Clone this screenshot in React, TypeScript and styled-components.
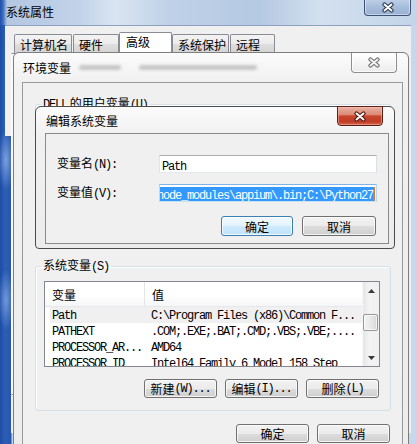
import React from "react";
import styled, { createGlobalStyle } from "styled-components";

const CJK = `"Noto Sans CJK SC", "Noto Sans", sans-serif`;
const MONO = `"Liberation Mono", "DejaVu Sans Mono", monospace`;

const GlobalStyle = createGlobalStyle`
  html, body { margin: 0; padding: 0; }
  body { font-family: ${CJK}; font-size: 12px; color: #000; background: #2a5bb3; }
  #root { width: 417px; height: 444px; }
`;

const Desktop = styled.div`
  position: relative;
  width: 417px;
  height: 444px;
  overflow: hidden;
  display: flex;
  flex-direction: column;
  background:
    radial-gradient(ellipse 8px 30px at 6px 160px, rgba(140, 175, 230, 0.8), rgba(140, 175, 230, 0) 100%),
    radial-gradient(ellipse 8px 30px at 6px 300px, rgba(140, 175, 230, 0.7), rgba(140, 175, 230, 0) 100%),
    linear-gradient(90deg, #1d4ca5 0px, #2d5fb6 5px, #2656ae 11px, #c3d5ea 12px, #c8d8ec 417px);
`;

const SysTitle = styled.div`
  position: relative;
  height: 25px;
  flex: none;
  padding: 3px 0 0 6px;
  box-sizing: border-box;
  line-height: 17px;
  font-size: 12px;
  color: #000;
  background: linear-gradient(90deg, #1f4fa8 0px, #3a6bc0 3px, #b3c7e2 7px, #c2d3e9 80px, #dbe5f1 115px, #bfd1e7 170px, #b5c9e3 260px, #d3e0ef 320px, #c9d9ec 380px, #c3d5ea 417px);
`;

const SysClient = styled.div`
  margin: 0 6px 0 5px;
  height: 408px;
  border-top: 1px solid #8ea2bf;
  box-sizing: border-box;
  display: flex;
  flex-direction: column;
  background:
    linear-gradient(#f0f0f0, #f0f0f0) 0 0 / 100% 110px no-repeat,
    linear-gradient(#f0f0f0, #f0f0f0) 6px 0 / calc(100% - 6px) 100% no-repeat;
`;

const TabStrip = styled.div`
  display: flex;
  align-items: flex-end;
  height: 27px;
  padding-left: 9px;
  flex: none;
`;

const Tab = styled.div<{ $w: number; $ml: number; $sel?: boolean }>`
  box-sizing: border-box;
  width: ${(p) => p.$w}px;
  margin-left: ${(p) => p.$ml}px;
  height: ${(p) => (p.$sel ? 21 : 19)}px;
  border: 1px solid #898c95;
  border-bottom: none;
  border-radius: 2px 2px 0 0;
  padding-left: ${(p) => (p.$sel ? 6 : 5)}px;
  line-height: ${(p) => (p.$sel ? 18 : 19)}px;
  font-size: 12px;
  white-space: nowrap;
  background: ${(p) =>
    p.$sel ? "#ffffff" : "linear-gradient(180deg, #f3f3f3 0%, #ebebeb 50%, #dedede 51%, #d4d4d4 100%)"};
`;

const TabPane = styled.div`
  flex: 1;
  margin: 0 4px 38px 6px;
  border: 1px solid #898c95;
  border-left-color: #fbfbfb;
  background: #f7f7f7;
`;

const CloseBase = styled.div`
  position: absolute;
  box-sizing: border-box;
  display: flex;
  align-items: center;
  justify-content: center;
  border-radius: 0 0 4px 4px;
`;

const SysClose = styled(CloseBase)`
  right: 6px;
  top: -2px;
  width: 47px;
  height: 18px;
  border: 1px solid #3d5173;
  border-top: none;
  background: linear-gradient(180deg, #c3d3e8 0%, #a9bedc 50%, #98b0d4 100%);
  box-shadow: inset 0 0 0 1px rgba(255, 255, 255, 0.45);
  padding-top: 2px;
`;

const InactiveClose = styled(CloseBase)`
  right: 6px;
  top: 0;
  width: 46px;
  height: 20px;
  border: 1px solid #8e8e8e;
  border-top: none;
  background: linear-gradient(180deg, #ffffff 0%, #f6f6f6 50%, #ebebeb 100%);
  box-shadow: inset 0 0 0 1px rgba(255, 255, 255, 0.8);
`;

const RedClose = styled(CloseBase)`
  right: 6px;
  top: -1px;
  width: 46px;
  height: 20px;
  border: 1px solid #5b1f15;
  background: linear-gradient(180deg, #eab2a5 0%, #dc8a75 42%, #c8472f 50%, #c13c24 80%, #d3664b 100%);
  box-shadow: inset 0 0 0 1px rgba(255, 200, 190, 0.45);
`;

const CloseGlyph = ({ fill, outline }: { fill: string; outline: string }) => (
  <svg width="14" height="11" viewBox="0 0 14 11">
    <path d="M3.5 2.5 L10.5 8.5 M10.5 2.5 L3.5 8.5" stroke={outline} strokeWidth="4.2" strokeLinecap="round" fill="none" />
    <path d="M3.5 2.5 L10.5 8.5 M10.5 2.5 L3.5 8.5" stroke={fill} strokeWidth="2" strokeLinecap="round" fill="none" />
  </svg>
);

const Frame = styled.div<{ $active?: boolean }>`
  position: absolute;
  box-sizing: border-box;
  display: flex;
  flex-direction: column;
  border: 1px solid ${(p) => (p.$active ? "#4b4b4b" : "#7e7e7e")};
  border-radius: 6px 6px 4px 4px;
  background: linear-gradient(180deg, #fbfbfb 0px, #f1f1f1 28px, #ececec 100%);
`;

const EnvWindow = styled(Frame)`
  left: 13px;
  top: 52px;
  width: 396px;
  height: 420px;
  padding: 0 5px 0 8px;
`;

const EditDialog = styled(Frame)`
  left: 35px;
  top: 106px;
  width: 360px;
  height: 143px;
  padding: 0 5px 4px 9px;
`;

const TitleBar = styled.div<{ $h: number }>`
  position: relative;
  flex: none;
  height: ${(p) => p.$h}px;
  display: flex;
  align-items: center;
  padding-left: 1px;
  font-size: 12px;
  white-space: nowrap;
`;

const Smudge = styled.span<{ $w: number; $ml: number }>`
  display: inline-block;
  width: ${(p) => p.$w}px;
  height: 5px;
  margin-left: ${(p) => p.$ml}px;
  background: rgba(110, 110, 110, 0.35);
  border-radius: 3px;
  filter: blur(1.6px);
`;

const EnvClient = styled.div`
  flex: 1;
  border: 1px solid #9a9a9a;
  background: #f0f0f0;
  display: flex;
  flex-direction: column;
  align-items: flex-start;
`;

const Group = styled.fieldset<{ $top: number; $bottom: number }>`
  box-sizing: border-box;
  width: 356px;
  min-inline-size: 0;
  margin: ${(p) => p.$top}px 0 ${(p) => p.$bottom}px 12px;
  padding: 7px 10px 12px 8px;
  border: 1px solid #d5dfe5;
  border-radius: 3px;
  box-shadow: inset 1px 1px 0 #ffffff;
`;

const Legend = styled.legend`
  margin-left: -3px;
  padding: 0 2px;
  line-height: 14px;
  font-size: 12px;
  white-space: nowrap;
`;

const Mono = styled.span`
  font-family: ${MONO};
  font-size: 12px;
  letter-spacing: -1.2px;
`;

const Spacer = styled.div<{ $h: number }>`
  height: ${(p) => p.$h}px;
`;

const ListView = styled.div`
  box-sizing: border-box;
  width: 336px;
  height: 86px;
  border: 1px solid #828790;
  background: #ffffff;
  display: flex;
  overflow: hidden;
`;

const ListBody = styled.div`
  flex: 1;
  min-width: 0;
  display: flex;
  flex-direction: column;
  overflow: hidden;
`;

const HeaderRow = styled.div`
  flex: none;
  display: flex;
  height: 25px;
  box-sizing: border-box;
  border-bottom: 1px solid #e7e8ea;
  background: linear-gradient(180deg, #ffffff 0%, #ffffff 55%, #f5f6f7 100%);
`;

const HeaderCell = styled.div<{ $w?: number }>`
  ${(p) => (p.$w ? `width: ${p.$w}px; flex: none; border-right: 1px solid #e3e4e6;` : "flex: 1;")}
  box-sizing: border-box;
  display: flex;
  align-items: center;
  padding-left: 7px;
  font-size: 12px;
`;

const Row = styled.div<{ $sel?: boolean }>`
  flex: none;
  display: flex;
  height: 16px;
  margin-left: 5px;
  align-items: center;
  white-space: nowrap;
  background: ${(p) => (p.$sel ? "#f0f0f0" : "transparent")};
`;

const Cell = styled.div<{ $w?: number; $pl: number }>`
  ${(p) => (p.$w ? `width: ${p.$w}px; flex: none;` : "flex: 1; min-width: 0;")}
  box-sizing: border-box;
  padding-left: ${(p) => p.$pl}px;
  overflow: hidden;
  line-height: 16px;
`;

const ScrollBar = styled.div`
  flex: none;
  width: 17px;
  display: flex;
  flex-direction: column;
  background: linear-gradient(90deg, #e6e6e6 0%, #f3f3f3 40%, #f0f0f0 100%);
  border-left: 1px solid #f7f7f7;
  box-sizing: border-box;
`;

const ScrollArrow = styled.div`
  flex: none;
  height: 17px;
  display: flex;
  align-items: center;
  justify-content: center;
`;

const ScrollTrack = styled.div`
  flex: 1;
  display: flex;
  flex-direction: column;
  padding-top: 15px;
`;

const Thumb = styled.div`
  box-sizing: border-box;
  width: 15px;
  height: 17px;
  border: 1px solid #979797;
  border-radius: 2px;
  background: linear-gradient(90deg, #f3f3f3 0%, #e8e8e8 50%, #d6d6d6 100%);
  box-shadow: inset 0 0 0 1px rgba(255, 255, 255, 0.7);
`;

const ButtonRow = styled.div<{ $mt: number; $pr: number; $gap: number }>`
  display: flex;
  justify-content: flex-end;
  gap: ${(p) => p.$gap}px;
  margin-top: ${(p) => p.$mt}px;
  padding-right: ${(p) => p.$pr}px;
  align-self: stretch;
`;

const Button = styled.div<{ $w: number; $h?: number; $default?: boolean }>`
  box-sizing: border-box;
  width: ${(p) => p.$w}px;
  height: ${(p) => p.$h ?? 19}px;
  border: 1px solid ${(p) => (p.$default ? "#3c7fb1" : "#707070")};
  border-radius: 3px;
  background: ${(p) =>
    p.$default
      ? "linear-gradient(180deg, #f2f9fe 0%, #e3f2fc 50%, #cfeafc 51%, #bfe3fb 100%)"
      : "linear-gradient(180deg, #f2f2f2 0%, #ebebeb 50%, #dddddd 51%, #cfcfcf 100%)"};
  box-shadow: inset 0 0 0 1px rgba(255, 255, 255, 0.75);
  display: flex;
  align-items: center;
  justify-content: center;
  font-size: 12px;
  white-space: nowrap;
`;

const EditClient = styled.div`
  flex: 1;
  border: 1px solid #8a8a8a;
  background: #f0f0f0;
  display: flex;
  flex-direction: column;
  padding-top: 20px;
`;

const FieldGrid = styled.div`
  display: grid;
  grid-template-columns: 102px 218px;
  row-gap: 9px;
  padding-left: 11px;
  align-items: center;
`;

const FieldLabel = styled.div`
  font-size: 12px;
  white-space: nowrap;
  line-height: 18px;
`;

const TextBox = styled.div<{ $focus?: boolean }>`
  box-sizing: border-box;
  height: 18px;
  border: 1px solid;
  border-color: ${(p) => (p.$focus ? "#7eb4ea #b7d9f7 #c7e2f1 #b7d9f7" : "#abadb3 #dbdfe6 #e3e9ef #e2e3ea")};
  background: #ffffff;
  overflow: hidden;
  white-space: nowrap;
  padding: 1px 0 0 2px;
  line-height: 15px;
`;

const Selected = styled.span`
  display: inline-block;
  margin-left: -5px;
  background: #3399ff;
  color: #ffffff;
  line-height: 14px;
  height: 14px;
  border-right: 2px solid #d9793c;
`;

const Triangle = ({ up }: { up?: boolean }) => (
  <svg width="7" height="4" viewBox="0 0 7 4">
    <polygon points={up ? "0,4 7,4 3.5,0" : "0,0 7,0 3.5,4"} fill="#3b3b3b" />
  </svg>
);

const tabs = [
  { label: "计算机名", w: 58, ml: 0 },
  { label: "硬件", w: 46, ml: 1 },
  { label: "高级", w: 53, ml: 0, sel: true },
  { label: "系统保护", w: 57, ml: 0 },
  { label: "远程", w: 45, ml: 1 },
];

const rows = [
  { name: "Path", value: "C:\\Program Files (x86)\\Common F...", sel: true },
  { name: "PATHEXT", value: ".COM;.EXE;.BAT;.CMD;.VBS;.VBE;...." },
  { name: "PROCESSOR_AR...", value: "AMD64" },
  { name: "PROCESSOR_ID", value: "Intel64 Family 6 Model 158 Step" },
];

export default function App() {
  return (
    <>
      <GlobalStyle />
      <Desktop>
        <SysTitle>
          系统属性
          <SysClose>
            <CloseGlyph fill="#ffffff" outline="#2c3950" />
          </SysClose>
        </SysTitle>
        <SysClient>
          <TabStrip>
            {tabs.map((t) => (
              <Tab key={t.label} $w={t.w} $ml={t.ml} $sel={t.sel}>
                {t.label}
              </Tab>
            ))}
          </TabStrip>
          <TabPane />
        </SysClient>

        <EnvWindow>
          <TitleBar $h={29}>
            环境变量
            <Smudge $w={42} $ml={8} />
            <Smudge $w={118} $ml={18} />
            <InactiveClose>
              <CloseGlyph fill="#f4f4f4" outline="#6d6d6d" />
            </InactiveClose>
          </TitleBar>
          <EnvClient>
            <Group $top={13} $bottom={12}>
              <Legend>
                <Mono>DELL</Mono> 的用户变量<Mono>(U)</Mono>
              </Legend>
              <Spacer $h={114} />
            </Group>
            <Group $top={0} $bottom={0}>
              <Legend>
                系统变量<Mono>(S)</Mono>
              </Legend>
              <ListView>
                <ListBody>
                  <HeaderRow>
                    <HeaderCell $w={100}>变量</HeaderCell>
                    <HeaderCell>值</HeaderCell>
                  </HeaderRow>
                  {rows.map((r) => (
                    <Row key={r.name} $sel={r.sel}>
                      <Cell $w={94} $pl={2}>
                        <Mono>{r.name}</Mono>
                      </Cell>
                      <Cell $pl={7}>
                        <Mono>{r.value}</Mono>
                      </Cell>
                    </Row>
                  ))}
                </ListBody>
                <ScrollBar>
                  <ScrollArrow>
                    <Triangle up />
                  </ScrollArrow>
                  <ScrollTrack>
                    <Thumb />
                  </ScrollTrack>
                  <ScrollArrow>
                    <Triangle />
                  </ScrollArrow>
                </ScrollBar>
              </ListView>
              <ButtonRow $mt={12} $pr={1} $gap={8}>
                <Button $w={73}>
                  新建<Mono>(W)...</Mono>
                </Button>
                <Button $w={73}>
                  编辑<Mono>(I)...</Mono>
                </Button>
                <Button $w={73}>
                  删除<Mono>(L)</Mono>
                </Button>
              </ButtonRow>
            </Group>
            <ButtonRow $mt={13} $pr={12} $gap={8}>
              <Button $w={73}>确定</Button>
              <Button $w={73}>取消</Button>
            </ButtonRow>
          </EnvClient>
        </EnvWindow>

        <EditDialog $active>
          <TitleBar $h={26}>
            编辑系统变量
            <RedClose>
              <CloseGlyph fill="#ffffff" outline="#4a1810" />
            </RedClose>
          </TitleBar>
          <EditClient>
            <FieldGrid>
              <FieldLabel>
                变量名<Mono>(N):</Mono>
              </FieldLabel>
              <TextBox>
                <Mono>Path</Mono>
              </TextBox>
              <FieldLabel>
                变量值<Mono>(V):</Mono>
              </FieldLabel>
              <TextBox $focus>
                <Selected>
                  <Mono>node_modules\appium\.bin;C:\Python27</Mono>
                </Selected>
              </TextBox>
            </FieldGrid>
            <ButtonRow $mt={13} $pr={12} $gap={9}>
              <Button $w={72} $h={20} $default>
                确定
              </Button>
              <Button $w={74} $h={20}>
                取消
              </Button>
            </ButtonRow>
          </EditClient>
        </EditDialog>
      </Desktop>
    </>
  );
}
